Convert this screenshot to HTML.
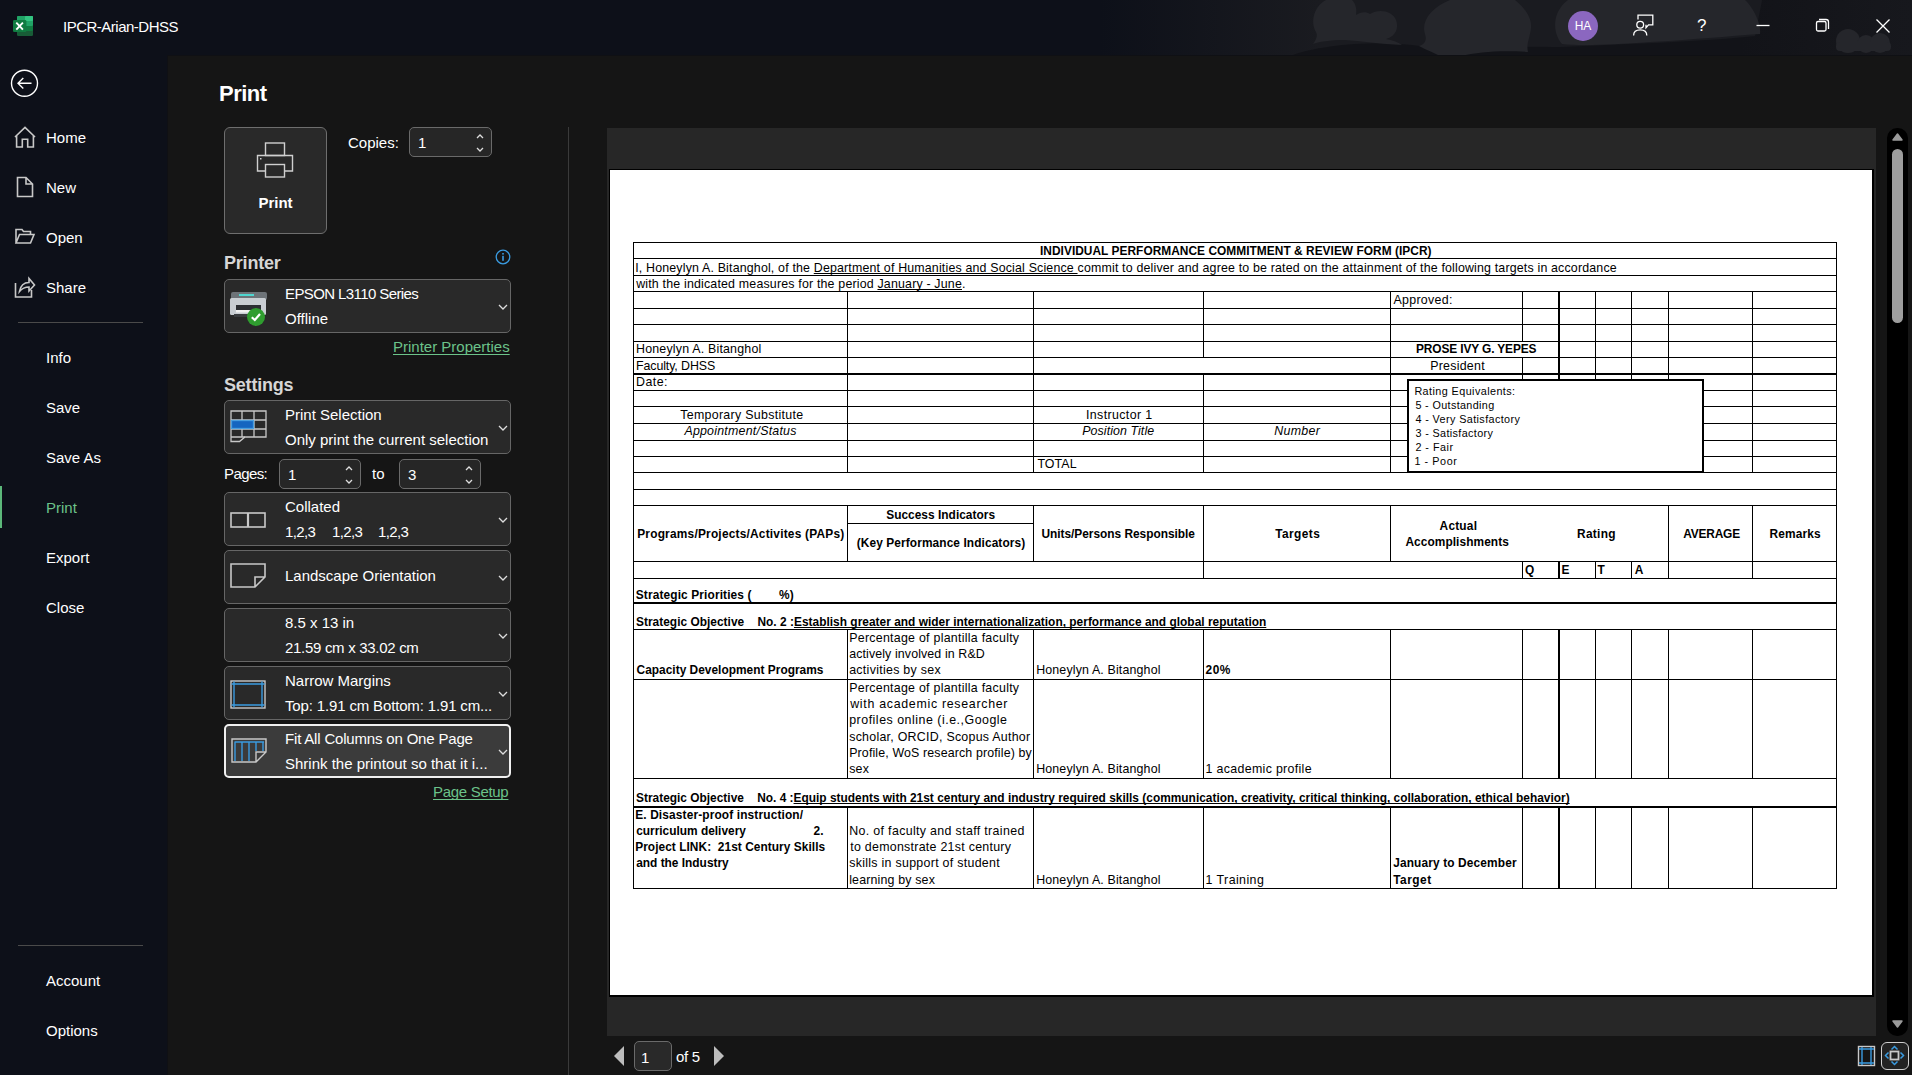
<!DOCTYPE html>
<html><head><meta charset="utf-8">
<style>
*{margin:0;padding:0;box-sizing:border-box}
html,body{width:1912px;height:1075px;overflow:hidden;background:#141414;font-family:"Liberation Sans",sans-serif;color:#fff}
.abs{position:absolute}
#title{position:absolute;left:0;top:0;width:1912px;height:56px;background:#0e111a;overflow:hidden}
#side{position:absolute;left:0;top:56px;width:168px;height:1019px;background:#0d1019}
#main{position:absolute;left:168px;top:56px;width:1744px;height:1019px;background:#151515}
.nav{position:absolute;left:46px;margin-top:1px;font-size:15px;line-height:20px;color:#fff}
.navicon{position:absolute;left:13px}
.sep{position:absolute;left:18px;width:125px;height:1px;background:#4a4a4a}
.h1{position:absolute;left:219px;top:80px;font-size:22px;font-weight:bold;line-height:28px;letter-spacing:-0.5px}
.h2{position:absolute;left:224px;margin-top:1px;font-size:18px;font-weight:bold;line-height:24px;color:#d6d6d6;letter-spacing:-0.2px}
.dd{position:absolute;left:224px;width:287px;height:54px;background:#292929;border:1px solid #666;border-radius:5px}
.dd .t1{position:absolute;left:60px;top:4px;font-size:15px;line-height:20px;white-space:nowrap}
.dd .t2{position:absolute;left:60px;top:29px;font-size:15px;line-height:20px;white-space:nowrap}
.dd .t0{position:absolute;left:60px;top:15px;font-size:15px;line-height:20px;white-space:nowrap}
.dd .chev{position:absolute;left:272px;top:22px}
.dd svg.ic{position:absolute;left:5px;top:9px}
.spin{position:absolute;height:30px;background:#262626;border:1px solid #6a6a6a;border-radius:5px}
.spin span{position:absolute;left:8px;top:5px;font-size:15px;line-height:20px}
.spin svg{position:absolute;right:6px;top:4px}
.lbl{position:absolute;font-size:15px;line-height:20px}
.link{position:absolute;font-size:15px;line-height:20px;color:#6cc38a;text-decoration:underline;text-underline-offset:2px;text-decoration-skip-ink:none}
/* sheet */
#prevbg{position:absolute;left:607px;top:128px;width:1269px;height:908px;background:#272727}
#page{position:absolute;left:609px;top:169px;width:1265px;height:828px;background:#000}
#pagew{position:absolute;left:610px;top:170px;width:1262px;height:825px;background:#fff}
#sheet i{position:absolute;background:#000;display:block}
#sheet b{position:absolute;font-weight:normal;font-size:12.4px;line-height:16px;color:#000;white-space:nowrap;letter-spacing:0.2px}
#sheet b.bd{font-weight:bold;font-size:11.9px;letter-spacing:0}
#sheet b.it{font-style:italic}
#sheet b.c{width:600px;text-align:center}
#sheet b.rr{width:600px;text-align:right}
#sheet b.pre{white-space:pre}
#sheet u{text-decoration:underline;text-underline-offset:1px;text-decoration-skip-ink:none}
#sheet b.l1{letter-spacing:0.16px}
.rbox{position:absolute;left:1407px;top:379px;width:297px;height:94px;background:#fff;border:2px solid #000}
#sheet b.rb{font-size:10.8px}
.rbox div{position:absolute;left:6px;margin-top:-1px;font-size:11px;line-height:14px;color:#000;letter-spacing:0.25px;white-space:nowrap}
</style></head><body>
<div id="title">
  <svg class="abs" style="left:0;top:0" width="1912" height="56" viewBox="0 0 1912 56">
    <defs>
      <linearGradient id="tg" x1="1100" x2="1320" gradientUnits="userSpaceOnUse">
        <stop offset="0" stop-color="#1a1b20" stop-opacity="0"/><stop offset="1" stop-color="#1a1b20" stop-opacity="1"/>
      </linearGradient>
      <linearGradient id="tg2" x1="1740" x2="1912" gradientUnits="userSpaceOnUse">
        <stop offset="0" stop-color="#121318"/><stop offset="1" stop-color="#17181d"/>
      </linearGradient>
    </defs>
    <rect x="0" y="0" width="1912" height="56" fill="#0d1019"/>
    <rect x="1100" y="0" width="812" height="56" fill="url(#tg)"/>
    <path d="M1290 56 C1320 44 1380 40 1420 46 C1470 48 1520 46 1560 47 C1620 44 1700 42 1755 36 L1762 0 H1912 V56 Z" fill="url(#tg2)"/>
    <g fill="#25262b">
      <path d="M1326 0 H1352 C1356 4 1357 10 1356 15 C1360 12 1366 11 1370 14 C1378 9 1392 10 1396 20 C1399 28 1396 36 1386 39 C1392 40 1398 42 1402 45 C1380 44 1360 41 1345 40 C1330 40 1318 42 1313 44 C1316 40 1318 36 1316 32 C1310 22 1314 6 1326 0 Z"/>
      <path d="M1450 0 H1515 C1525 8 1532 18 1531 28 C1530 38 1526 44 1528 52 C1500 50 1480 52 1460 56 H1440 C1432 52 1422 48 1419 46 C1425 44 1427 40 1425 34 C1421 22 1430 8 1450 0 Z"/>
      <path d="M1568 0 H1745 C1752 6 1762 24 1760 34 C1730 36 1690 40 1650 42 C1610 45 1580 46 1562 44 C1552 32 1552 12 1568 0 Z"/>
      <circle cx="1848" cy="41" r="12"/>
      <circle cx="1866" cy="44" r="9"/>
      <circle cx="1880" cy="43" r="10"/>
      <rect x="1836" y="42" width="55" height="9" rx="4"/>
    </g>
  </svg>
  <!-- excel logo -->
  <svg class="abs" style="left:12px;top:15px" width="22" height="22" viewBox="0 0 22 22">
    <rect x="5" y="1" width="16" height="20" rx="1.2" fill="#185c37"/>
    <rect x="5" y="1" width="16" height="15" rx="1.2" fill="#107c41"/>
    <rect x="5" y="1" width="16" height="10" rx="1.2" fill="#21a366"/>
    <rect x="13" y="1" width="8" height="5" rx="1" fill="#33c481"/>
    <rect x="1" y="5" width="13.4" height="12" rx="1.3" fill="#107c41"/>
    <path d="M4.3 7.6 L10.9 14.6 M10.9 7.6 L4.3 14.6" stroke="#fff" stroke-width="1.9" fill="none"/>
  </svg>
  <div class="abs" style="left:63px;top:18px;font-size:15px;line-height:18px;color:#fff;letter-spacing:-0.5px">IPCR-Arian-DHSS</div>
  <!-- avatar -->
  <div class="abs" style="left:1568px;top:11px;width:30px;height:30px;border-radius:15px;background:#8b67c0;color:#fff;font-size:12px;line-height:30px;text-align:center">HA</div>
  <svg class="abs" style="left:1630px;top:12px" width="26" height="26" viewBox="0 0 26 26" fill="none" stroke="#fff" stroke-width="1.3">
    <path d="M8 7.5 V3.2 H22.8 V12.8 H18.5 L16 15.8 V12.8"/>
    <circle cx="10.2" cy="12.8" r="3.4"/>
    <path d="M3.6 23.5 C3.6 19.5 6.6 17.8 10.2 17.8 C13.8 17.8 16.8 19.5 16.8 23.5"/>
  </svg>
  <div class="abs" style="left:1697px;top:16px;font-size:17px;line-height:20px;color:#fff">?</div>
  <svg class="abs" style="left:1750px;top:10px" width="150" height="30" viewBox="0 0 150 30" fill="none" stroke="#fff" stroke-width="1.3">
    <path d="M6.5 15.5 H19.5"/>
    <rect x="66.5" y="11.5" width="9.5" height="9.5" rx="1.5"/>
    <path d="M69 9.5 H76 A2.5 2.5 0 0 1 78.5 12 V19"/>
    <path d="M126.5 9.5 L139.5 22.5 M139.5 9.5 L126.5 22.5"/>
  </svg>
</div>

<div id="side">
  <svg class="abs" style="left:9px;top:12px" width="30" height="30" viewBox="0 0 30 30" fill="none" stroke="#fff" stroke-width="1.4">
    <circle cx="15.5" cy="15.3" r="13"/>
    <path d="M9 15.3 H22.5 M14.3 10 L9 15.3 L14.3 20.6"/>
  </svg>
  <!-- home -->
  <svg class="abs" style="left:13px;top:68px" width="24" height="26" viewBox="0 0 24 26" fill="none" stroke="#c8c8c8" stroke-width="1.6">
    <path d="M2 13 L12 3.4 L22 13 M3.6 11.5 V23 H9.3 V15.3 H14.7 V23 H20.4 V11.5"/>
  </svg>
  <div class="nav" style="top:71px">Home</div>
  <svg class="abs" style="left:13px;top:116px" width="24" height="30" viewBox="0 0 24 30" fill="none" stroke="#c8c8c8" stroke-width="1.6">
    <path d="M4.5 5.5 H13 L19.5 12 V24.5 H4.5 Z M13 5.5 V12 H19.5"/>
  </svg>
  <div class="nav" style="top:121px">New</div>
  <svg class="abs" style="left:13px;top:166px" width="24" height="24" viewBox="0 0 24 24" fill="none" stroke="#c8c8c8" stroke-width="1.6">
    <path d="M3 21 V7.5 H9 L10.5 9.5 H17.5 V12.5 M3 21 L6.5 12.5 H21 L17.5 21 Z"/>
  </svg>
  <div class="nav" style="top:171px">Open</div>
  <svg class="abs" style="left:13px;top:216px" width="26" height="30" viewBox="0 0 26 30" fill="none" stroke="#c8c8c8" stroke-width="1.6">
    <path d="M2.5 11 V25 H18.5 V18"/>
    <path d="M6.5 19.5 C7.5 14 11 10.5 16 10.5 V6.5 L21.5 13 L16 19 V15 C12 15 9 16.5 6.5 19.5 Z"/>
  </svg>
  <div class="nav" style="top:221px">Share</div>
  <div class="sep" style="top:266px"></div>
  <div class="nav" style="top:291px">Info</div>
  <div class="nav" style="top:341px">Save</div>
  <div class="nav" style="top:391px">Save As</div>
  <div class="abs" style="left:0;top:430px;width:2px;height:42px;background:#5cb87a"></div>
  <div class="nav" style="top:441px;color:#6cc38a">Print</div>
  <div class="nav" style="top:491px">Export</div>
  <div class="nav" style="top:541px">Close</div>
  <div class="sep" style="top:889px"></div>
  <div class="nav" style="top:914px">Account</div>
  <div class="nav" style="top:964px">Options</div>
</div>

<div id="main"></div>
<div class="abs" style="left:167px;top:55px;width:1px;height:1020px;background:#0f1014"></div>
<div class="abs" style="left:167px;top:55px;width:1745px;height:1px;background:#0f1014"></div>
<div class="abs" style="left:568px;top:127px;width:1px;height:948px;background:#3a3a3a"></div>

<div class="h1">Print</div>

<!-- print button -->
<div class="abs" style="left:224px;top:127px;width:103px;height:107px;background:#292929;border:1px solid #6e6e6e;border-radius:6px"></div>
<svg class="abs" style="left:255px;top:140px" width="40" height="40" viewBox="0 0 40 40" fill="none" stroke="#cfcfcf" stroke-width="1.4">
  <rect x="10.5" y="3" width="19" height="12.5"/>
  <path d="M10 31 H2.5 V15.5 H37.5 V31 H30"/>
  <rect x="10.5" y="24.5" width="19" height="12.5"/>
  <rect x="5" y="18" width="1.5" height="1.5" fill="#cfcfcf" stroke="none"/>
</svg>
<div class="abs" style="left:224px;top:192px;width:103px;text-align:center;font-size:15px;font-weight:bold;line-height:20px;margin-top:1px">Print</div>

<div class="lbl" style="left:348px;top:133px">Copies:</div>
<div class="spin" style="left:409px;top:127px;width:83px"><span>1</span>
  <svg width="10" height="22" viewBox="0 0 10 22" fill="none" stroke="#ddd" stroke-width="1.3"><path d="M2 6 L5 3 L8 6 M2 16 L5 19 L8 16"/></svg></div>

<div class="h2" style="top:250px">Printer</div>
<svg class="abs" style="left:495px;top:249px" width="16" height="16" viewBox="0 0 16 16">
  <circle cx="8" cy="8" r="6.8" fill="none" stroke="#3a9be0" stroke-width="1.3"/>
  <rect x="7.2" y="6.8" width="1.6" height="5" fill="#3a9be0"/><rect x="7.2" y="4" width="1.6" height="1.6" fill="#3a9be0"/>
</svg>
<div class="dd" style="top:279px">
  <svg class="ic" width="40" height="40" viewBox="0 0 40 40" style="left:3px;top:8px">
    <rect x="3" y="4" width="36" height="8" rx="2" fill="#6d7378"/>
    <rect x="11" y="6" width="15" height="2" fill="#4fd6d0"/>
    <rect x="2" y="10" width="36" height="17" rx="1.5" fill="#c9ced3"/>
    <rect x="8" y="17" width="25" height="5" fill="#2c2f33"/>
    <rect x="8" y="22" width="25" height="2.5" fill="#f2f2f2"/>
    <rect x="6" y="26" width="30" height="3" fill="#3a3d40"/>
    <circle cx="28" cy="29" r="9" fill="#2f9d2f"/>
    <path d="M23.8 29.2 L26.8 32 L32 26" stroke="#fff" stroke-width="2.2" fill="none"/>
  </svg>
  <div class="t1" style="letter-spacing:-0.6px">EPSON L3110 Series</div><div class="t2">Offline</div>
  <svg class="chev" width="12" height="10" viewBox="0 0 12 10" fill="none" stroke="#ddd" stroke-width="1.3"><path d="M2 3 L6 7 L10 3"/></svg>
</div>
<div class="link" style="left:393px;top:337px">Printer Properties</div>

<div class="h2" style="top:372px">Settings</div>
<div class="dd" style="top:400px">
  <svg class="ic" width="40" height="40" viewBox="0 0 40 40" fill="none" stroke="#c8c8c8" stroke-width="1.3">
    <path d="M1 1 H36 V27 H15 L9.5 31.5 H1 Z"/>
    <path d="M1 10 H36 M1 19 H36 M1 27 H15 M12 1 V27 M24 1 V27"/>
    <rect x="1.5" y="10.5" width="22" height="8" fill="#1565c0" stroke="#4a9fe0"/>
  </svg>
  <div class="t1">Print Selection</div><div class="t2">Only print the current selection</div>
  <svg class="chev" width="12" height="10" viewBox="0 0 12 10" fill="none" stroke="#ddd" stroke-width="1.3"><path d="M2 3 L6 7 L10 3"/></svg>
</div>
<div class="lbl" style="left:224px;top:464px;letter-spacing:-0.6px">Pages:</div>
<div class="spin" style="left:279px;top:459px;width:82px"><span>1</span>
  <svg width="10" height="22" viewBox="0 0 10 22" fill="none" stroke="#ddd" stroke-width="1.3"><path d="M2 6 L5 3 L8 6 M2 16 L5 19 L8 16"/></svg></div>
<div class="lbl" style="left:372px;top:464px">to</div>
<div class="spin" style="left:399px;top:459px;width:82px"><span>3</span>
  <svg width="10" height="22" viewBox="0 0 10 22" fill="none" stroke="#ddd" stroke-width="1.3"><path d="M2 6 L5 3 L8 6 M2 16 L5 19 L8 16"/></svg></div>

<div class="dd" style="top:492px">
  <svg class="ic" width="40" height="40" viewBox="0 0 40 40" fill="none" stroke="#c8c8c8" stroke-width="1.6" style="left:5px;top:9px">
    <rect x="1" y="11" width="34" height="14"/><path d="M18 11 V25" stroke-width="2.2"/>
  </svg>
  <div class="t1">Collated</div><div class="t2" style="letter-spacing:-0.6px">1,2,3</div><div class="t2" style="left:107px;letter-spacing:-0.6px">1,2,3</div><div class="t2" style="left:153px;letter-spacing:-0.6px">1,2,3</div>
  <svg class="chev" width="12" height="10" viewBox="0 0 12 10" fill="none" stroke="#ddd" stroke-width="1.3"><path d="M2 3 L6 7 L10 3"/></svg>
</div>
<div class="dd" style="top:550px">
  <svg class="ic" width="40" height="40" viewBox="0 0 40 40" fill="none" stroke="#c8c8c8" stroke-width="1.6">
    <path d="M1 4 H35 V17 L25 27 H1 Z M25 27 V17 H35"/>
  </svg>
  <div class="t0">Landscape Orientation</div>
  <svg class="chev" width="12" height="10" viewBox="0 0 12 10" fill="none" stroke="#ddd" stroke-width="1.3"><path d="M2 3 L6 7 L10 3"/></svg>
</div>
<div class="dd" style="top:608px">
  <div class="t1">8.5 x 13 in</div><div class="t2" style="letter-spacing:-0.3px">21.59 cm x 33.02 cm</div>
  <svg class="chev" width="12" height="10" viewBox="0 0 12 10" fill="none" stroke="#ddd" stroke-width="1.3"><path d="M2 3 L6 7 L10 3"/></svg>
</div>
<div class="dd" style="top:666px">
  <svg class="ic" width="40" height="40" viewBox="0 0 40 40" fill="none" stroke-width="1.4">
    <rect x="1" y="5" width="34" height="27" stroke="#c8c8c8"/>
    <path d="M1.5 8 H34.5 M1.5 29 H34.5 M4 5.5 V31.5 M32 5.5 V31.5" stroke="#3a9be0"/>
  </svg>
  <div class="t1">Narrow Margins</div><div class="t2" style="letter-spacing:-0.15px">Top: 1.91 cm Bottom: 1.91 cm...</div>
  <svg class="chev" width="12" height="10" viewBox="0 0 12 10" fill="none" stroke="#ddd" stroke-width="1.3"><path d="M2 3 L6 7 L10 3"/></svg>
</div>
<div class="dd" style="top:724px;height:54px;background:#3b3b3b;border:2px solid #f0f0f0">
  <svg class="ic" width="40" height="40" viewBox="0 0 40 40" fill="none" stroke-width="1.4" style="left:5px;top:8px">
    <path d="M1 5 H35 V18 L25 28 H1 Z M25 28 V18 H35" stroke="#c8c8c8"/>
    <path d="M3.5 8 H33 M4 8 V27 M11 8 V27 M18 8 V27 M25 8 V17 M32 8 V17" stroke="#3a9be0"/>
  </svg>
  <div class="t1" style="left:59px;top:3px;letter-spacing:-0.18px">Fit All Columns on One Page</div><div class="t2" style="left:59px;top:28px">Shrink the printout so that it i...</div>
  <svg class="chev" style="left:271px;top:21px" width="12" height="10" viewBox="0 0 12 10" fill="none" stroke="#ddd" stroke-width="1.3"><path d="M2 3 L6 7 L10 3"/></svg>
</div>
<div class="link" style="left:433px;top:782px;letter-spacing:-0.3px">Page Setup</div>

<!-- preview -->
<div id="prevbg"></div>
<div id="page"></div>
<div id="pagew"></div>
<div id="sheet">
<i style="left:633px;top:242px;width:1204px;height:1px"></i>
<i style="left:633px;top:258px;width:1204px;height:1px"></i>
<i style="left:633px;top:275px;width:1204px;height:1px"></i>
<i style="left:633px;top:291px;width:1204px;height:1px"></i>
<i style="left:633px;top:308px;width:1204px;height:1px"></i>
<i style="left:633px;top:324px;width:1204px;height:1px"></i>
<i style="left:633px;top:341px;width:1204px;height:1px"></i>
<i style="left:633px;top:357px;width:1204px;height:1px"></i>
<i style="left:633px;top:390px;width:1204px;height:1px"></i>
<i style="left:633px;top:406px;width:1204px;height:1px"></i>
<i style="left:633px;top:423px;width:1204px;height:1px"></i>
<i style="left:633px;top:440px;width:1204px;height:1px"></i>
<i style="left:633px;top:456px;width:1204px;height:1px"></i>
<i style="left:633px;top:472px;width:1204px;height:1px"></i>
<i style="left:633px;top:489px;width:1204px;height:1px"></i>
<i style="left:633px;top:505px;width:1204px;height:1px"></i>
<i style="left:633px;top:561px;width:1204px;height:1px"></i>
<i style="left:633px;top:578px;width:1204px;height:1px"></i>
<i style="left:633px;top:629px;width:1204px;height:1px"></i>
<i style="left:633px;top:679px;width:1204px;height:1px"></i>
<i style="left:633px;top:778px;width:1204px;height:1px"></i>
<i style="left:633px;top:888px;width:1204px;height:1px"></i>
<i style="left:633px;top:373px;width:1204px;height:2px"></i>
<i style="left:633px;top:602px;width:1204px;height:2px"></i>
<i style="left:633px;top:806px;width:1204px;height:2px"></i>
<i style="left:847px;top:523px;width:187px;height:1px"></i>
<i style="left:633px;top:242px;width:1px;height:647px"></i>
<i style="left:1836px;top:242px;width:1px;height:647px"></i>
<i style="left:847px;top:291px;width:1px;height:182px"></i>
<i style="left:847px;top:505px;width:1px;height:57px"></i>
<i style="left:847px;top:629px;width:1px;height:150px"></i>
<i style="left:847px;top:806px;width:1px;height:83px"></i>
<i style="left:1033px;top:291px;width:1px;height:182px"></i>
<i style="left:1033px;top:505px;width:1px;height:57px"></i>
<i style="left:1033px;top:629px;width:1px;height:150px"></i>
<i style="left:1033px;top:806px;width:1px;height:83px"></i>
<i style="left:1390px;top:291px;width:1px;height:182px"></i>
<i style="left:1390px;top:505px;width:1px;height:57px"></i>
<i style="left:1390px;top:629px;width:1px;height:150px"></i>
<i style="left:1390px;top:806px;width:1px;height:83px"></i>
<i style="left:1203px;top:291px;width:1px;height:67px"></i>
<i style="left:1203px;top:373px;width:1px;height:100px"></i>
<i style="left:1203px;top:505px;width:1px;height:74px"></i>
<i style="left:1203px;top:629px;width:1px;height:150px"></i>
<i style="left:1203px;top:806px;width:1px;height:83px"></i>
<i style="left:1522px;top:291px;width:1px;height:51px"></i>
<i style="left:1522px;top:357px;width:1px;height:116px"></i>
<i style="left:1522px;top:561px;width:1px;height:18px"></i>
<i style="left:1522px;top:629px;width:1px;height:150px"></i>
<i style="left:1522px;top:806px;width:1px;height:83px"></i>
<i style="left:1558px;top:291px;width:2px;height:182px"></i>
<i style="left:1558px;top:561px;width:2px;height:18px"></i>
<i style="left:1558px;top:629px;width:2px;height:150px"></i>
<i style="left:1558px;top:806px;width:2px;height:83px"></i>
<i style="left:1595px;top:291px;width:1px;height:182px"></i>
<i style="left:1595px;top:561px;width:1px;height:18px"></i>
<i style="left:1595px;top:629px;width:1px;height:150px"></i>
<i style="left:1595px;top:806px;width:1px;height:83px"></i>
<i style="left:1631px;top:291px;width:1px;height:182px"></i>
<i style="left:1631px;top:561px;width:1px;height:18px"></i>
<i style="left:1631px;top:629px;width:1px;height:150px"></i>
<i style="left:1631px;top:806px;width:1px;height:83px"></i>
<i style="left:1668px;top:291px;width:1px;height:182px"></i>
<i style="left:1668px;top:505px;width:1px;height:74px"></i>
<i style="left:1668px;top:629px;width:1px;height:150px"></i>
<i style="left:1668px;top:806px;width:1px;height:83px"></i>
<i style="left:1752px;top:291px;width:1px;height:182px"></i>
<i style="left:1752px;top:505px;width:1px;height:74px"></i>
<i style="left:1752px;top:629px;width:1px;height:150px"></i>
<i style="left:1752px;top:806px;width:1px;height:83px"></i>
<div class="rbox"></div>
<b id="t0" class="bd" style="left:1040.00px;top:243px;letter-spacing:0.037px">INDIVIDUAL PERFORMANCE COMMITMENT &amp; REVIEW FORM (IPCR)</b>
<b id="t1" class="r" style="left:635.20px;top:260px;letter-spacing:0.172px">I, Honeylyn A. Bitanghol, of the <u>Department of Humanities and Social Science </u>commit to deliver and agree to be rated on the attainment of the following targets in accordance</b>
<b id="t2" class="r" style="left:636.20px;top:276px;letter-spacing:0.181px">with the indicated measures for the period <u>January - June</u>.</b>
<b id="t3" class="r" style="left:1393.40px;top:292px;letter-spacing:0.325px">Approved:</b>
<b id="t4" class="r" style="left:636.00px;top:341px;letter-spacing:0.200px">Honeylyn A. Bitanghol</b>
<b id="t5" class="bd" style="left:1416.00px;top:341px;letter-spacing:-0.117px">PROSE IVY G. YEPES</b>
<b id="t6" class="r" style="left:636.00px;top:358px;letter-spacing:-0.092px">Faculty, DHSS</b>
<b id="t7" class="r" style="left:1430.20px;top:358px;letter-spacing:0.260px">President</b>
<b id="t8" class="r" style="left:636.00px;top:374px;letter-spacing:0.450px">Date:</b>
<b id="t9" class="r" style="left:680.20px;top:407px;letter-spacing:0.304px">Temporary Substitute</b>
<b id="t10" class="r" style="left:1086.00px;top:407px;letter-spacing:0.380px">Instructor 1</b>
<b id="t11" class="r it" style="left:684.40px;top:423px;letter-spacing:0.229px">Appointment/Status</b>
<b id="t12" class="r it" style="left:1082.20px;top:423px;letter-spacing:0.085px">Position Title</b>
<b id="t13" class="r it" style="left:1274.20px;top:423px;letter-spacing:0.320px">Number</b>
<b id="t14" class="r" style="left:1037.40px;top:456px;letter-spacing:0.100px">TOTAL</b>
<b id="t15" class="bd" style="left:637.20px;top:526px;letter-spacing:0.212px">Programs/Projects/Activites (PAPs)</b>
<b id="t16" class="bd" style="left:886.20px;top:507px;letter-spacing:0.028px">Success Indicators</b>
<b id="t17" class="bd" style="left:856.80px;top:535px;letter-spacing:0.093px">(Key Performance Indicators)</b>
<b id="t18" class="bd" style="left:1041.40px;top:526px;letter-spacing:-0.018px">Units/Persons Responsible</b>
<b id="t19" class="bd" style="left:1275.20px;top:526px;letter-spacing:0.416px">Targets</b>
<b id="t20" class="bd" style="left:1439.60px;top:518px;letter-spacing:0.200px">Actual</b>
<b id="t21" class="bd" style="left:1405.40px;top:534px;letter-spacing:0.072px">Accomplishments</b>
<b id="t22" class="bd" style="left:1577.00px;top:526px;letter-spacing:0.300px">Rating</b>
<b id="t23" class="bd" style="left:1683.20px;top:526px;letter-spacing:-0.166px">AVERAGE</b>
<b id="t24" class="bd" style="left:1769.40px;top:526px;letter-spacing:0.166px">Remarks</b>
<b id="t25" class="bd" style="left:1525.00px;top:562px">Q</b>
<b id="t26" class="bd" style="left:1561.40px;top:562px">E</b>
<b id="t27" class="bd" style="left:1597.40px;top:562px">T</b>
<b id="t28" class="bd" style="left:1634.80px;top:562px">A</b>
<b id="t29" class="bd pre" style="left:635.80px;top:587px;letter-spacing:0.127px">Strategic Priorities (        %)</b>
<b id="t30" class="bd pre" style="left:636.00px;top:614px;letter-spacing:0.023px">Strategic Objective    No. 2 :<u>Establish greater and wider internationalization, performance and global reputation</u></b>
<b id="t31" class="bd" style="left:636.60px;top:662px;letter-spacing:0.018px">Capacity Development Programs</b>
<b id="t32" class="r" style="left:849.20px;top:630px;letter-spacing:0.267px">Percentage of plantilla faculty</b>
<b id="t33" class="r" style="left:849.20px;top:646px;letter-spacing:0.115px">actively involved in R&amp;D</b>
<b id="t34" class="r" style="left:849.20px;top:662px;letter-spacing:0.293px">activities by sex</b>
<b id="t35" class="r" style="left:1036.20px;top:662px;letter-spacing:0.150px">Honeylyn A. Bitanghol</b>
<b id="t36" class="bd" style="left:1205.60px;top:662px;letter-spacing:0.500px">20%</b>
<b id="t37" class="r" style="left:849.20px;top:680px;letter-spacing:0.267px">Percentage of plantilla faculty</b>
<b id="t38" class="r" style="left:850.20px;top:696px;letter-spacing:0.701px">with academic researcher</b>
<b id="t39" class="r" style="left:849.20px;top:712px;letter-spacing:0.514px">profiles online (i.e.,Google</b>
<b id="t40" class="r" style="left:849.20px;top:729px;letter-spacing:0.265px">scholar, ORCID, Scopus Author</b>
<b id="t41" class="r" style="left:849.20px;top:745px;letter-spacing:0.138px">Profile, WoS research profile) by</b>
<b id="t42" class="r" style="left:849.20px;top:761px">sex</b>
<b id="t43" class="r" style="left:1036.20px;top:761px;letter-spacing:0.150px">Honeylyn A. Bitanghol</b>
<b id="t44" class="r" style="left:1205.60px;top:761px;letter-spacing:0.319px">1 academic profile</b>
<b id="t45" class="bd pre" style="left:636.00px;top:790px;letter-spacing:0.009px">Strategic Objective    No. 4 :<u>Equip students with 21st century and industry required skills (communication, creativity, critical thinking, collaboration, ethical behavior)</u></b>
<b id="t46" class="bd pre" style="left:635.20px;top:807px;letter-spacing:0.138px">E. Disaster-proof instruction/</b>
<b id="t47" class="bd pre" style="left:636.20px;top:823px;letter-spacing:0.000px">curriculum delivery</b>
<b id="t48" class="bd pre" style="left:635.20px;top:839px;letter-spacing:0.049px">Project LINK:  21st Century Skills</b>
<b id="t49" class="bd pre" style="left:636.20px;top:855px;letter-spacing:0.001px">and the Industry</b>
<b id="t50" class="bd" style="left:813.60px;top:823px">2.</b>
<b id="t51" class="r" style="left:849.20px;top:823px;letter-spacing:0.345px">No. of faculty and staff trained</b>
<b id="t52" class="r" style="left:850.20px;top:839px;letter-spacing:0.276px">to demonstrate 21st century</b>
<b id="t53" class="r" style="left:849.20px;top:855px;letter-spacing:0.293px">skills in support of student</b>
<b id="t54" class="r" style="left:849.20px;top:872px;letter-spacing:0.166px">learning by sex</b>
<b id="t55" class="r" style="left:1036.20px;top:872px;letter-spacing:0.150px">Honeylyn A. Bitanghol</b>
<b id="t56" class="r" style="left:1205.60px;top:872px;letter-spacing:0.423px">1 Training</b>
<b id="t57" class="bd" style="left:1393.20px;top:855px;letter-spacing:0.134px">January to December</b>
<b id="t58" class="bd" style="left:1393.20px;top:872px;letter-spacing:0.500px">Target</b>
<b id="t59" class="rb" style="left:1414.40px;top:383px;letter-spacing:0.428px">Rating Equivalents:</b>
<b id="t60" class="rb" style="left:1415.40px;top:397px;letter-spacing:0.357px">5 - Outstanding</b>
<b id="t61" class="rb" style="left:1415.40px;top:411px;letter-spacing:0.395px">4 - Very Satisfactory</b>
<b id="t62" class="rb" style="left:1415.40px;top:425px;letter-spacing:0.367px">3 - Satisfactory</b>
<b id="t63" class="rb" style="left:1415.40px;top:439px;letter-spacing:0.486px">2 - Fair</b>
<b id="t64" class="rb" style="left:1414.40px;top:453px;letter-spacing:0.572px">1 - Poor</b>

</div>

<!-- scrollbar -->
<div class="abs" style="left:1887px;top:128px;width:21px;height:908px;background:#000;border-radius:10px"></div>
<svg class="abs" style="left:1887px;top:128px" width="21" height="20" viewBox="0 0 21 20"><path d="M6 12 L10.5 6 L15 12 Z" fill="#9a9a9a" stroke="#9a9a9a" stroke-width="1.5" stroke-linejoin="round"/></svg>
<div class="abs" style="left:1892px;top:149px;width:11px;height:174px;background:#9e9e9e;border-radius:6px"></div>
<svg class="abs" style="left:1887px;top:1016px" width="21" height="20" viewBox="0 0 21 20"><path d="M6 5 L10.5 11 L15 5 Z" fill="#9a9a9a" stroke="#9a9a9a" stroke-width="1.5" stroke-linejoin="round"/></svg>

<!-- bottom nav -->
<svg class="abs" style="left:613px;top:1045px" width="12" height="22" viewBox="0 0 12 22"><path d="M11 1 L1 11 L11 21 Z" fill="#bdbdbd"/></svg>
<div class="abs" style="left:634px;top:1041px;width:38px;height:30px;border:1px solid #6a6a6a;border-radius:5px;background:#292929"></div>
<div class="abs" style="left:641px;top:1048px;font-size:15px;line-height:20px">1</div>
<div class="abs" style="left:676px;top:1047px;font-size:15px;line-height:20px;letter-spacing:-0.3px">of 5</div>
<svg class="abs" style="left:713px;top:1045px" width="12" height="22" viewBox="0 0 12 22"><path d="M1 1 L11 11 L1 21 Z" fill="#bdbdbd"/></svg>
<svg class="abs" style="left:1857px;top:1045px" width="20" height="22" viewBox="0 0 20 22" fill="none" stroke-width="1.4">
  <rect x="1.5" y="1.5" width="16" height="19" stroke="#c8c8c8"/>
  <path d="M2 4 H17 M2 18 H17 M5 2 V20 M14 2 V20" stroke="#3a9be0"/>
</svg>
<div class="abs" style="left:1881px;top:1042px;width:28px;height:28px;border:1px solid #cfcfcf;border-radius:6px;background:#222"></div>
<svg class="abs" style="left:1881px;top:1042px" width="28" height="28" viewBox="0 0 28 28" fill="none" stroke-width="1.5">
  <rect x="9.5" y="9.5" width="8" height="8" stroke="#c8c8c8" stroke-width="1.8"/>
  <path d="M10.5 7.5 L13.5 4.5 L16.5 7.5 M10.5 19.5 L13.5 22.5 L16.5 19.5 M7.5 10.5 L4.5 13.5 L7.5 16.5 M19.5 10.5 L22.5 13.5 L19.5 16.5" stroke="#3a9be0"/>
</svg>
</body></html>
